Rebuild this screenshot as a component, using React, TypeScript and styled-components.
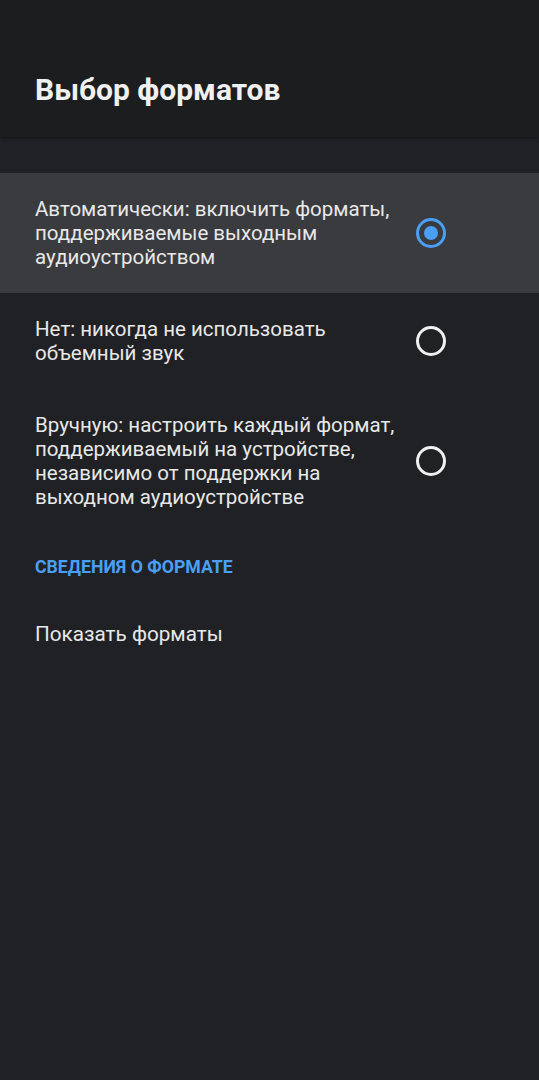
import React from "react";
import styled, { createGlobalStyle } from "styled-components";

const bgColor = "#202124";
const headerColor = "#1c1d1f";
const selectedColor = "#3a3b3f";
const primaryText = "#e8e8e8";
const accentColor = "#4a9ff5";

const GlobalStyle = createGlobalStyle`
  html, body {
    margin: 0;
    padding: 0;
    background: ${bgColor};
  }
  body {
    font-family: Roboto, "Noto Sans", sans-serif;
    -webkit-font-smoothing: antialiased;
  }
`;

const Screen = styled.div`
  width: 539px;
  height: 1080px;
  background: ${bgColor};
  display: flex;
  flex-direction: column;
`;

const Header = styled.header`
  height: 137px;
  background: ${headerColor};
  box-shadow: 0 1px 3px rgba(0, 0, 0, 0.45);
  display: flex;
  align-items: flex-end;
  padding: 0 35px 30px;
  box-sizing: border-box;
  position: relative;
  z-index: 1;
`;

const Title = styled.h1`
  margin: 0;
  font-size: 30px;
  font-weight: 700;
  color: #f0f0f0;
  line-height: 34px;
`;

const List = styled.div`
  display: flex;
  flex-direction: column;
  padding-top: 36px;
`;

const OptionRow = styled.div<{ $selected?: boolean }>`
  display: flex;
  align-items: center;
  padding: 24px 93px 24px 35px;
  background: ${(p) => (p.$selected ? selectedColor : "transparent")};
`;

const OptionText = styled.div`
  flex: 1;
  font-size: 20.5px;
  line-height: 24px;
  color: ${primaryText};
`;

const Radio = styled.div<{ $checked?: boolean }>`
  width: 30px;
  height: 30px;
  box-sizing: border-box;
  border-radius: 50%;
  border: 3px solid ${(p) => (p.$checked ? accentColor : "#f0f0f0")};
  margin-left: 12px;
  flex-shrink: 0;
  display: flex;
  align-items: center;
  justify-content: center;

  &::after {
    content: "";
    display: ${(p) => (p.$checked ? "block" : "none")};
    width: 14px;
    height: 14px;
    border-radius: 50%;
    background: ${accentColor};
  }
`;

const SectionTitle = styled.div`
  padding: 24px 35px 0;
  font-size: 17.7px;
  line-height: 20px;
  font-weight: 700;
  color: ${accentColor};
  text-transform: uppercase;
`;

const LinkRow = styled.div`
  padding: 45px 35px 0;
  font-size: 20.7px;
  line-height: 24px;
  color: ${primaryText};
`;

const options = [
  {
    text: "Автоматически: включить форматы, поддерживаемые выходным аудиоустройством",
    checked: true,
  },
  { text: "Нет: никогда не использовать объемный звук", checked: false },
  {
    text: "Вручную: настроить каждый формат, поддерживаемый на устройстве, независимо от поддержки на выходном аудиоустройстве",
    checked: false,
  },
];

const App: React.FC = () => {
  return (
    <Screen>
      <GlobalStyle />
      <Header>
        <Title>Выбор форматов</Title>
      </Header>
      <List>
        {options.map((o) => (
          <OptionRow key={o.text} $selected={o.checked}>
            <OptionText>{o.text}</OptionText>
            <Radio $checked={o.checked} />
          </OptionRow>
        ))}
        <SectionTitle>Сведения о формате</SectionTitle>
        <LinkRow>Показать форматы</LinkRow>
      </List>
    </Screen>
  );
};

export default App;
